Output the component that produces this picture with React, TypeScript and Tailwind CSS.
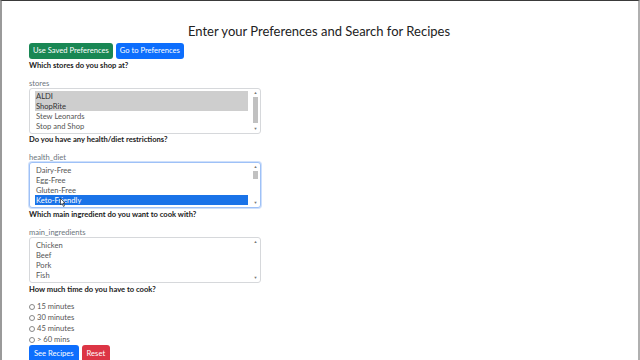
import React from "react";

const font = { fontFamily: "Lato, 'Open Sans', sans-serif" };

interface ListBoxProps {
  items: string[];
  selected: string[];
  active?: boolean;
  thumbTop: string;
  thumbHeight: string;
  focused?: boolean;
}

const ListBox: React.FC<ListBoxProps> = ({ items, selected, active, thumbTop, thumbHeight, focused }) => (
  <div
    className={`relative w-[232px] h-[46px] rounded-[3px] border bg-white ${
      focused ? "border-[#9ec1f7] shadow-[0_0_0_1px_#cfe0fb]" : "border-[#d6d8db]"
    }`}
  >
    <div className="flex flex-col pl-[5px] pt-[2px] w-[218px]">
      {items.map((item) => {
        const isSel = selected.includes(item);
        return (
          <div
            key={item}
            className={`h-[10px] leading-[10px] text-[7.6px] pl-[1px] ${
              isSel ? (active ? "bg-[#1a73e8] text-white" : "bg-[#cecece] text-[#333]") : "text-[#555]"
            }`}
          >
            {item}
          </div>
        );
      })}
    </div>
    {/* scrollbar */}
    <div className="absolute right-[1px] top-[1px] bottom-[1px] w-[7px] flex flex-col items-center">
      <span className="text-[4px] leading-[6px] text-[#777]">▲</span>
      <div className="relative flex-1 w-full">
        <div className="absolute left-[1px] right-[1px] bg-[#c1c1c1]" style={{ top: thumbTop, height: thumbHeight }} />
      </div>
      <span className="text-[4px] leading-[6px] text-[#777]">▼</span>
    </div>
  </div>
);

const Question: React.FC<{ text: string }> = ({ text }) => (
  <div className="text-[7.6px] font-bold text-[#1a1a1a] leading-[10px]">{text}</div>
);

const Label: React.FC<{ text: string }> = ({ text }) => (
  <div className="text-[7.6px] text-[#6c757d] leading-[10px] mt-[8px]">{text}</div>
);

const App: React.FC = () => {
  const times = ["15 minutes", "30 minutes", "45 minutes", "> 60 mins"];
  return (
    <div
      className="w-[640px] h-[360px] overflow-hidden bg-white border-t border-t-[#3a3a3a] border-l-2 border-l-[#9a9a9a] border-r-2 border-r-[#b0b0b0]"
      style={font}
    >
      <h1 className="text-center text-[13px] text-[#222] mt-[21px] leading-[18px] pr-[2px]">
        Enter your Preferences and Search for Recipes
      </h1>
      <div className="pl-[27px] mt-[3px]">
        <div className="flex gap-[3px]">
          <button className="h-[16px] px-[4px] rounded-[3px] bg-[#198754] text-white text-[7.6px]">
            Use Saved Preferences
          </button>
          <button className="h-[16px] px-[4px] rounded-[3px] bg-[#0d6efd] text-white text-[7.6px]">
            Go to Preferences
          </button>
        </div>
        <div className="mt-[1px]">
          <Question text="Which stores do you shop at?" />
        </div>
        <Label text="stores" />
        <ListBox
          items={["ALDI", "ShopRite", "Stew Leonards", "Stop and Shop"]}
          selected={["ALDI", "ShopRite"]}
          thumbTop="1px"
          thumbHeight="26px"
        />
        <div>
          <Question text="Do you have any health/diet restrictions?" />
        </div>
        <Label text="health_diet" />
        <div className="relative">
          <ListBox
            items={["Dairy-Free", "Egg-Free", "Gluten-Free", "Keto-Friendly"]}
            selected={["Keto-Friendly"]}
            active
            focused
            thumbTop="1px"
            thumbHeight="8px"
          />
          <svg className="absolute left-[31px] top-[36px]" width="6" height="9" viewBox="0 0 12 18">
            <path d="M1 1 L1 14 L4 11 L7 17 L9 16 L6 10 L10 10 Z" fill="#fff" stroke="#111" strokeWidth="1.2" />
          </svg>
        </div>
        <div className="mt-[1px]">
          <Question text="Which main ingredient do you want to cook with?" />
        </div>
        <Label text="main_ingredients" />
        <ListBox
          items={["Chicken", "Beef", "Pork", "Fish"]}
          selected={[]}
          thumbTop="0px"
          thumbHeight="0px"
        />
        <div className="mt-[1px]">
          <Question text="How much time do you have to cook?" />
        </div>
        <div className="flex flex-col mt-[7px]">
          {times.map((t) => (
            <div key={t} className="flex items-center gap-[2px] h-[11px] text-[7.6px] text-[#555]">
              <span className="w-[6px] h-[6px] rounded-full border border-[#888] bg-white" />
              <span>{t}</span>
            </div>
          ))}
        </div>
        <div className="flex gap-[3px]">
          <button className="h-[18px] px-[5px] rounded-[3px] bg-[#0d6efd] text-white text-[7.6px]">
            See Recipes
          </button>
          <button className="h-[18px] px-[5px] rounded-[3px] bg-[#dc3545] text-white text-[7.6px]">
            Reset
          </button>
        </div>
      </div>
    </div>
  );
};

export default App;
